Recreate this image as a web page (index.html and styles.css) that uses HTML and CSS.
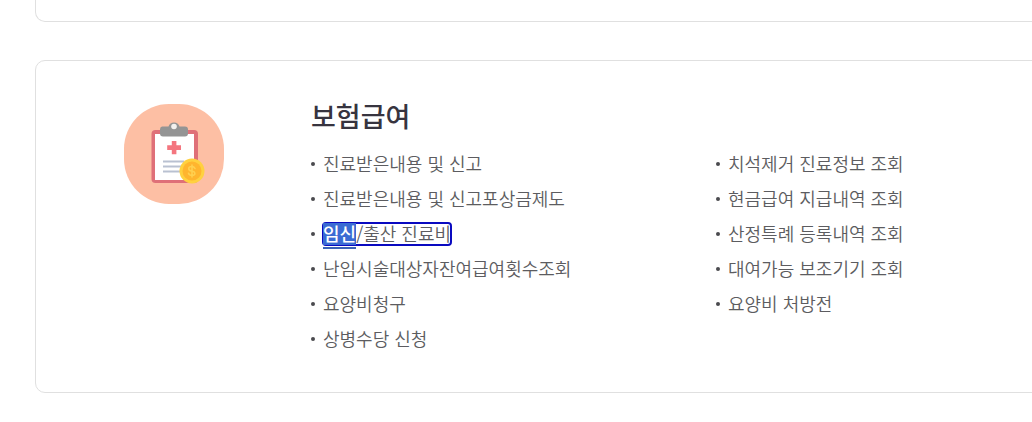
FILE: index.html
```html
<!DOCTYPE html>
<html lang="ko">
<head>
<meta charset="utf-8">
<title>보험급여</title>
<link rel="stylesheet" href="styles.css">
</head>
<body>
<main class="page">
  <div class="card card-previous"></div>
  <section class="card card-menu" aria-labelledby="menu-title">
    <svg class="menu-icon" viewBox="0 0 100 100" aria-hidden="true">
      <rect width="100" height="100" rx="45" fill="#fdbfa4"/>
      <rect x="27.500" y="26" width="46.500" height="53" rx="4" fill="#df7078"/>
      <path fill="#fff" d="M31 30h39v46H31z"/>
      <path fill="#949494" d="M38 22.500h6.500a5.800 5.800 0 0 1 11 0H61a3 3 0 0 1 3 3v4a3 3 0 0 1-3 3H39a3 3 0 0 1-3-3v-4a3 3 0 0 1 2-3z"/>
      <circle cx="50" cy="22.500" r="2.800" fill="#f3f1ef"/>
      <path fill="#f4767f" d="M47.800 37h4.600v4.300H57v4.600h-4.600v4.300h-4.600v-4.300h-4.600v-4.600h4.600z"/>
      <path stroke="#b9c1d1" stroke-width="2" d="M39 57.500h21M39 62.500h18M39 67.500h17"/>
      <circle cx="68" cy="67" r="12.500" fill="#ffd13f"/>
      <circle cx="68" cy="67" r="9.500" fill="#ffb52e"/>
      <path fill="none" stroke="#ffd04f" stroke-width="1.600" stroke-linecap="round" d="M71 64.500c-.7-1.500-2-2-3.300-2-3.800 0-4 4-.2 4.500 4.500.6 4.300 4.500.5 4.500-1.800 0-3-.8-3.500-2.200M68 61v12"/>
    </svg>
    <div class="menu-body">
      <h2 class="menu-title" id="menu-title">보험급여</h2>
      <div class="menu-columns">
        <ul class="menu-list">
          <li class="menu-item"><a class="menu-link" href="#">진료받은내용 및 신고</a></li>
          <li class="menu-item"><a class="menu-link" href="#">진료받은내용 및 신고포상금제도</a></li>
          <li class="menu-item"><a class="menu-link is-focused" href="#"><span class="selected">임신</span>/출산 진료비</a></li>
          <li class="menu-item"><a class="menu-link" href="#">난임시술대상자잔여급여횟수조회</a></li>
          <li class="menu-item"><a class="menu-link" href="#">요양비청구</a></li>
          <li class="menu-item"><a class="menu-link" href="#">상병수당 신청</a></li>
        </ul>
        <ul class="menu-list">
          <li class="menu-item"><a class="menu-link" href="#">치석제거 진료정보 조회</a></li>
          <li class="menu-item"><a class="menu-link" href="#">현금급여 지급내역 조회</a></li>
          <li class="menu-item"><a class="menu-link" href="#">산정특례 등록내역 조회</a></li>
          <li class="menu-item"><a class="menu-link" href="#">대여가능 보조기기 조회</a></li>
          <li class="menu-item"><a class="menu-link" href="#">요양비 처방전</a></li>
        </ul>
      </div>
    </div>
  </section>
</main>
</body>
</html>
```

FILE: styles.css
```css
* {
  box-sizing: border-box;
}

body {
  margin: 0;
  background: #fff;
  color: #5c5c60;
  font-family: "Noto Sans CJK KR", sans-serif;
}

.page {
  display: flex;
  flex-direction: column;
  gap: 38px;
  padding-left: 35px;
  overflow: hidden;
}

.card {
  margin-right: -90px;
  border: 1px solid #e0e0e0;
  border-radius: 10px;
}

.card-previous {
  padding-top: 21px;
  border-top: 0;
  border-radius: 0 0 10px 10px;
}

.card-menu {
  display: flex;
  align-items: flex-start;
  gap: 87px;
  padding: 35px 0 36px 88px;
}

.menu-icon {
  flex: none;
  width: 100px;
  height: 100px;
  margin-top: 8px;
}

.menu-body {
  flex: 1;
}

.menu-title {
  margin: 0 0 10px;
  color: #37343f;
  font-size: 27px;
  font-weight: 500;
  line-height: 40px;
}

.menu-columns {
  display: grid;
  grid-template-columns: 1fr 1fr;
}

.menu-list {
  margin: 0;
  padding: 0;
  list-style: none;
}

.menu-item {
  display: flex;
  align-items: center;
  gap: 8px;
  height: 35px;
}

.menu-item::before {
  content: "";
  width: 4px;
  height: 4px;
  border-radius: 50%;
  background: #4a4a4e;
}

.menu-link {
  padding-bottom: 2px;
  color: inherit;
  font-size: 18px;
  font-weight: 350;
  line-height: 20px;
  text-decoration: none;
  white-space: nowrap;
}

.is-focused {
  border-radius: 3px;
  outline: 2px solid #0a0ac0;
  outline-offset: -1px;
}

.selected {
  display: inline-block;
  position: relative;
  padding-bottom: 2px;
  margin-bottom: -2px;
  background: #3a6bd3;
  color: #fff;
  font-weight: 500;
}

.selected::after {
  content: "";
  position: absolute;
  top: 24px;
  left: 0;
  width: 100%;
  height: 2px;
  background: #3a62b8;
}
```
